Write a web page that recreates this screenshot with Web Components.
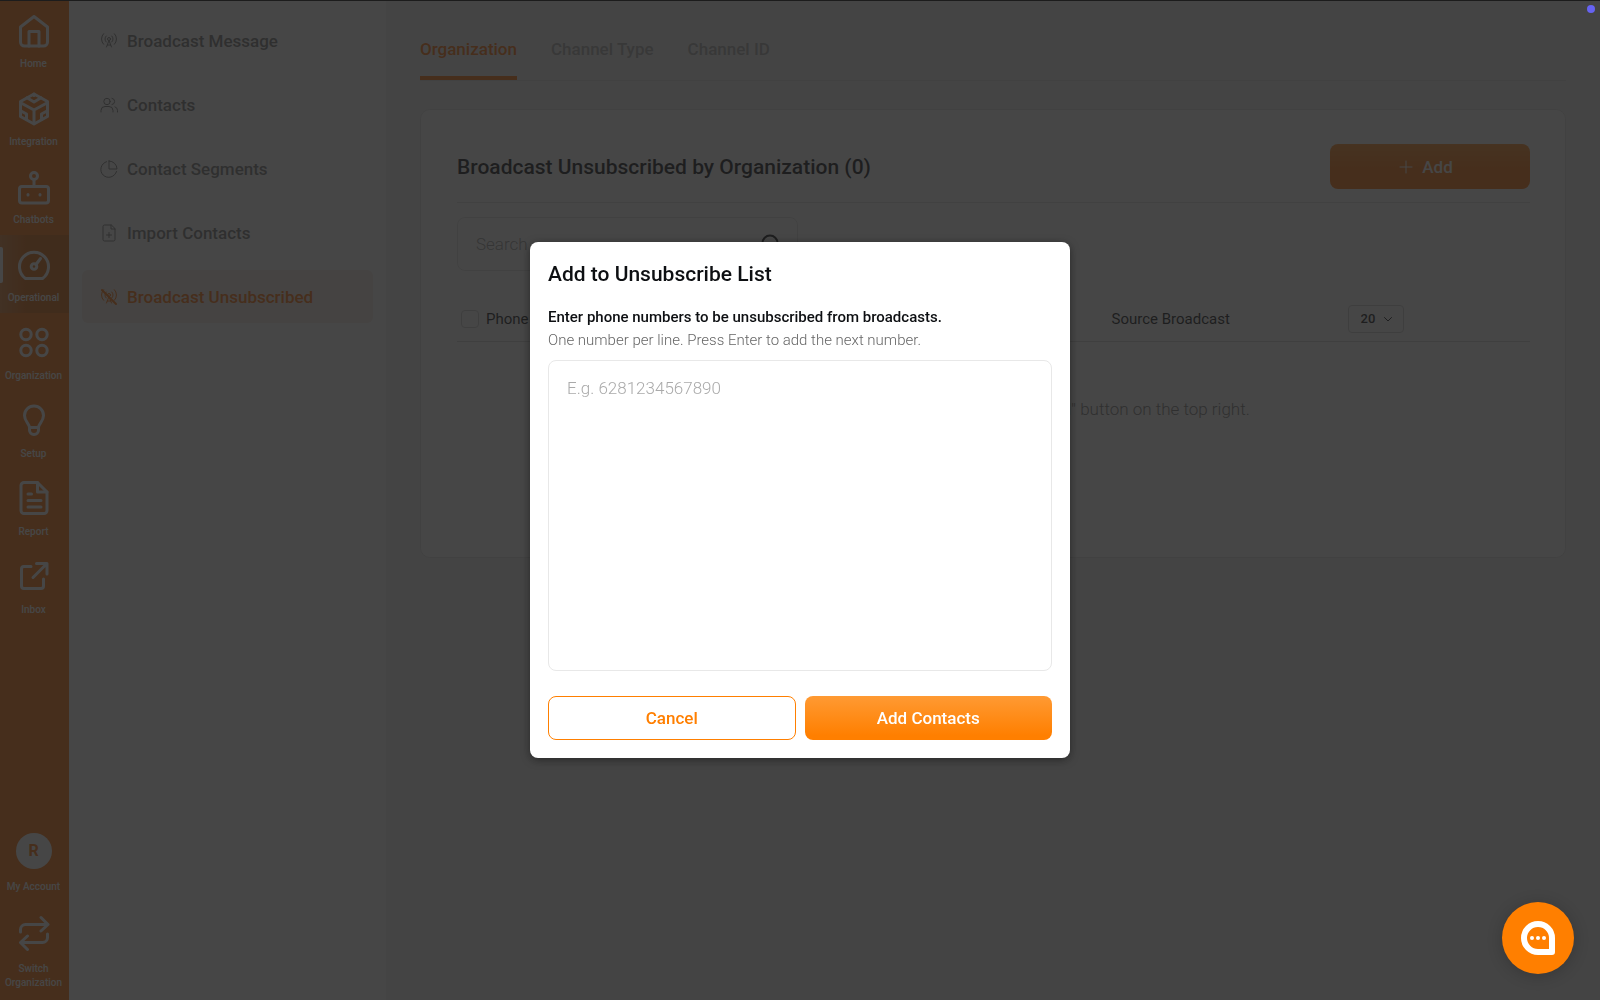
<!DOCTYPE html>
<html lang="en">
<head>
<meta charset="utf-8">
<meta name="viewport" content="width=device-width, initial-scale=1">
<title>Broadcast Unsubscribed</title>
<style>
  :root {
    --orange: #ff7f00;
    --brand: #ff6d00;
    --line: #e2e2e2;
    --muted: #777;
    --ink: #0d0f12;
  }
  body {
    margin: 0;
    font-family: Roboto, "Liberation Sans", sans-serif;
    font-size: 16px;
    color: var(--ink);
    background: #f3f3f3;
  }
</style>
</head>
<body>
<app-shell>
  <app-rail slot="rail">
    <rail-item icon="home" label="Home"></rail-item>
    <rail-item icon="cube" label="Integration"></rail-item>
    <rail-item icon="bot" label="Chatbots"></rail-item>
    <rail-item icon="gauge" label="Operational" active></rail-item>
    <rail-item icon="circles" label="Organization"></rail-item>
    <rail-item icon="bulb" label="Setup"></rail-item>
    <rail-item icon="report" label="Report"></rail-item>
    <rail-item icon="external" label="Inbox"></rail-item>
    <rail-item slot="bottom" initial="R" label="My Account"></rail-item>
    <rail-item slot="bottom" icon="switch" label="Switch Organization"></rail-item>
  </app-rail>
  <side-menu slot="menu">
    <side-link icon="broadcast">Broadcast Message</side-link>
    <side-link icon="users">Contacts</side-link>
    <side-link icon="pie">Contact Segments</side-link>
    <side-link icon="import">Import Contacts</side-link>
    <side-link icon="broadcast-off" active>Broadcast Unsubscribed</side-link>
  </side-menu>
  <tab-bar tabs="Organization,Channel Type,Channel ID"></tab-bar>
  <unsubscribed-card></unsubscribed-card>
</app-shell>
<unsubscribe-dialog></unsubscribe-dialog>
<chat-bubble></chat-bubble>
<status-dot></status-dot>

<script>
  const tower = '<circle cx="9" cy="7" r="1.5"/><path d="M9 8.5 6.5 15M9 8.5 11.5 15M7.3 13h3.4M6.2 10a4 4 0 0 1 0-6M11.8 10a4 4 0 0 0 0-6M3.6 12.3a7.5 7.5 0 0 1 0-10.6M14.4 12.3a7.5 7.5 0 0 0 0-10.6"/>';

  // name: [box size, stroke width, markup]
  const ICONS = {
    home: [36, 3, '<path d="M4.500 14 18 3.500 31.500 14V29a4 4 0 0 1-4 4h-19a4 4 0 0 1-4-4z"/><path d="M13 33V18.500h10V33"/>'],
    cube: [36, 3, '<path d="M18 3 31.500 10.500v15L18 33 4.500 25.500v-15z"/><path d="M6 12.500 18 19l12-6.500M18 19v13M11 6.800 18 11l7-4.200M18 3v1.500M5 20l5.500 3v5.500M31 20l-5.500 3v5.500"/>'],
    bot: [36, 3, '<rect x="3.500" y="17.500" width="29" height="16.500" rx="2.500"/><circle cx="18" cy="7" r="3.500"/><path d="M18 10.500v7"/><path d="M12 25.500v.4M24 25.500v.4"/>'],
    gauge: [36, 3, '<path d="M9.500 31.500a14.500 14.500 0 1 1 17 0z"/><circle cx="18" cy="19.500" r="2.800"/><path d="m20 17.500 4.500-6"/>'],
    circles: [36, 3, '<circle cx="10" cy="9.500" r="5.200"/><circle cx="26" cy="9.500" r="5.200"/><circle cx="10" cy="25.500" r="5.200"/><circle cx="26" cy="25.500" r="5.200"/>'],
    bulb: [36, 3, '<path d="M13.500 24.500c0-4-5-6-5-12a9.500 9.500 0 0 1 19 0c0 6-5 8-5 12v2.500a4.500 4.500 0 0 1-9 0zM13.500 24.500h9"/>'],
    report: [36, 3, '<path d="M21.500 1.500H8A3 3 0 0 0 5 4.500v25a3 3 0 0 0 3 3h20a3 3 0 0 0 3-3V11z"/><path d="M21.500 1.500V11H31M12 13h3.500M12 19.500h13M12 26h13"/>'],
    external: [36, 3, '<path d="M15 7.500H8a2.500 2.500 0 0 0-2.500 2.500v17A2.500 2.500 0 0 0 8 29.500h17a2.500 2.500 0 0 0 2.500-2.500v-7M20.500 4.500H31v10.500M30.500 5 17 18.500"/>'],
    switch: [36, 3, '<path d="M4.500 17v-2.500a5 5 0 0 1 5-5h22M25 2.500l7 7-7 6.500M31.500 19v3.500a5 5 0 0 1-5 5h-22M11.500 21l-7 6.500 7 7"/>'],
    broadcast: [18, 1, tower],
    'broadcast-off': [18, 1, tower + '<path stroke-width="2" d="m2 2 14 14"/>'],
    users: [18, 1, '<circle cx="7" cy="5.500" r="3.200"/><path d="M1 16v-1.500a4 4 0 0 1 4-4h4a4 4 0 0 1 4 4V16M12 2.300a3.200 3.200 0 0 1 0 6.300M15 10.800a3.700 3.700 0 0 1 2.500 3.700V16"/>'],
    pie: [18, 1, '<path d="M9 1v8h8A8 8 0 0 0 9 1z"/><path d="M6.500 1.700A8 8 0 1 0 16.500 11.500"/>'],
    import: [18, 1, '<path d="M11 1H4.500A1.500 1.500 0 0 0 3 2.500v13A1.500 1.500 0 0 0 4.500 17h9a1.500 1.500 0 0 0 1.500-1.500V5zM11 1v4h4M9 8.500v5M6.500 11h5"/>'],
    plus: [14, 1, '<path d="M7 1v12M1 7h12"/>'],
    search: [20, 2, '<circle cx="9" cy="9" r="7.500"/><path d="m14.500 14.500 4.500 4.500"/>'],
    chevron: [10, 1, '<path d="m1.500 3.500 3.500 3.500 3.500-3.500"/>']
  };

  class UiIcon extends HTMLElement {
    connectedCallback() {
      const [size, width, body] = ICONS[this.getAttribute('name')];
      this.attachShadow({ mode: 'open' });
      this.shadowRoot.innerHTML = `
        <style>
          :host { display: inline-flex; flex: none; }
          svg { fill: none; stroke: currentColor; stroke-linecap: round; stroke-linejoin: round; }
        </style>
        <svg width="${size}" height="${size}" viewBox="0 0 ${size} ${size}" stroke-width="${width}" aria-hidden="true">${body}</svg>
      `;
    }
  }

  class AppShell extends HTMLElement {
    connectedCallback() {
      this.attachShadow({ mode: 'open' });
      this.shadowRoot.innerHTML = `
        <style>
          :host {
            display: grid;
            grid-template-columns: 69px 317px 1fr;
            min-height: 100vh;
            box-sizing: border-box;
            border-top: 1px solid #000;
          }
          main { padding: 0 34px; }
        </style>
        <slot name="rail"></slot>
        <slot name="menu"></slot>
        <main><slot></slot></main>
      `;
    }
  }

  class AppRail extends HTMLElement {
    connectedCallback() {
      this.attachShadow({ mode: 'open' });
      this.shadowRoot.innerHTML = `
        <style>
          :host { display: block; background: var(--brand); color: white; }
          nav { display: flex; flex-direction: column; height: 100%; }
          .bottom { margin-top: auto; display: flex; flex-direction: column; gap: 3px; padding-bottom: 4px; }
        </style>
        <nav aria-label="Main">
          <slot></slot>
          <div class="bottom"><slot name="bottom"></slot></div>
        </nav>
      `;
    }
  }

  class RailItem extends HTMLElement {
    connectedCallback() {
      const initial = this.getAttribute('initial');
      this.attachShadow({ mode: 'open' });
      this.shadowRoot.innerHTML = `
        <style>
          :host { display: block; }
          a {
            display: flex;
            flex-direction: column;
            align-items: center;
            gap: 8px;
            min-height: 78px;
            padding: 12px 2px 6px 0;
            box-sizing: border-box;
            color: inherit;
            text-decoration: none;
            font-size: 10px;
            font-weight: 500;
            line-height: 14px;
            text-align: center;
          }
          :host([slot="bottom"]) a { gap: 11px; }
          :host([active]) { position: relative; }
          :host([active]) a {
            background: linear-gradient(90deg, rgba(255, 255, 255, .2), transparent 40%), #dc6000;
          }
          :host([active])::before {
            content: "";
            position: absolute;
            left: 0;
            top: 12px;
            width: 3px;
            height: 36px;
            background: white;
            border-radius: 0 2px 2px 0;
          }
          .avatar {
            width: 36px;
            height: 36px;
            border-radius: 50%;
            background: white;
            color: var(--brand);
            font-size: 16px;
            font-weight: 700;
            line-height: 36px;
          }
        </style>
        <a href="#">
          ${initial ? `<span class="avatar">${initial}</span>` : `<ui-icon name="${this.getAttribute('icon')}"></ui-icon>`}
          <span>${this.getAttribute('label')}</span>
        </a>
      `;
    }
  }

  class SideMenu extends HTMLElement {
    connectedCallback() {
      this.attachShadow({ mode: 'open' });
      this.shadowRoot.innerHTML = `
        <style>
          :host { display: block; background: white; }
          nav { display: flex; flex-direction: column; gap: 11px; padding: 13px; }
        </style>
        <nav aria-label="Operational"><slot></slot></nav>
      `;
    }
  }

  class SideLink extends HTMLElement {
    connectedCallback() {
      this.attachShadow({ mode: 'open' });
      this.shadowRoot.innerHTML = `
        <style>
          :host { display: block; color: var(--muted); }
          a {
            display: flex;
            align-items: center;
            gap: 9px;
            height: 53px;
            padding: 0 18px;
            border-radius: 6px;
            color: inherit;
            text-decoration: none;
            font-size: 17px;
            font-weight: 500;
          }
          :host([active]) { color: var(--brand); }
          :host([active]) a { background: #f6ece4; }
        </style>
        <a href="#"><ui-icon name="${this.getAttribute('icon')}"></ui-icon><span><slot></slot></span></a>
      `;
    }
  }

  class TabBar extends HTMLElement {
    connectedCallback() {
      const tabs = this.getAttribute('tabs').split(',');
      this.attachShadow({ mode: 'open' });
      this.shadowRoot.innerHTML = `
        <style>
          :host { display: block; border-bottom: 1px solid #ddd; }
          div { display: flex; gap: 34px; }
          button {
            border: 0;
            border-bottom: 4px solid transparent;
            background: none;
            padding: 36px 0 15px;
            font: 500 17px/24px Roboto, "Liberation Sans", sans-serif;
            color: #aaa;
          }
          button[aria-selected="true"] { color: var(--brand); border-color: var(--brand); }
        </style>
        <div role="tablist">
          ${tabs.map((t, i) => `<button role="tab" aria-selected="${i === 0}">${t}</button>`).join('')}
        </div>
      `;
    }
  }

  class UnsubscribedCard extends HTMLElement {
    connectedCallback() {
      this.attachShadow({ mode: 'open' });
      this.shadowRoot.innerHTML = `
        <style>
          :host {
            display: block;
            margin-top: 28px;
            padding: 34px 35px 136px 36px;
            background: white;
            border: 1px solid var(--line);
            border-radius: 10px;
          }
          header {
            display: flex;
            align-items: center;
            justify-content: space-between;
            padding-bottom: 13px;
            border-bottom: 1px solid var(--line);
          }
          h1 { margin: 0; font-size: 21px; font-weight: 500; }
          .add {
            display: flex;
            align-items: center;
            justify-content: center;
            gap: 9px;
            width: 200px;
            height: 45px;
            padding: 0 8px 0 0;
            border: 0;
            border-radius: 8px;
            background: linear-gradient(#ff8a20, var(--brand) 60%);
            color: white;
            font: 500 17px Roboto, "Liberation Sans", sans-serif;
          }
          .search {
            display: flex;
            align-items: center;
            width: 341px;
            height: 54px;
            margin: 14px 0 20px;
            padding: 0 16px;
            box-sizing: border-box;
            border: 1px solid var(--line);
            border-radius: 8px;
          }
          .search input {
            flex: 1;
            min-width: 0;
            border: 0;
            outline: 0;
            background: none;
            font: 300 17px Roboto, "Liberation Sans", sans-serif;
          }
          input::placeholder { color: #999; }
          table { width: 100%; table-layout: fixed; border-collapse: collapse; }
          th {
            height: 50px;
            padding: 6px 0 0;
            box-sizing: border-box;
            border-bottom: 1px solid #d5d5d5;
            text-align: left;
            font-size: 15px;
            font-weight: 400;
          }
          .phone { display: flex; align-items: center; gap: 7px; padding-left: 4px; }
          .phone input {
            appearance: none;
            width: 18px;
            height: 18px;
            margin: 0;
            border: 1px solid #ccc;
            border-radius: 4px;
          }
          .size { display: inline-grid; align-items: center; }
          .size select, .size ui-icon { grid-area: 1 / 1; }
          .size select {
            appearance: none;
            width: 56px;
            height: 28px;
            padding: 0 12px;
            border: 1px solid #ccc;
            border-radius: 4px;
            background: none;
            color: inherit;
            font: 500 13px Roboto, "Liberation Sans", sans-serif;
          }
          .size ui-icon { justify-self: end; margin-right: 11px; pointer-events: none; }
          td {
            padding: 55px 0 0;
            text-align: center;
            font-size: 17px;
            font-weight: 300;
            line-height: 24px;
            color: var(--muted);
          }
        </style>
        <header>
          <h1>Broadcast Unsubscribed by Organization (0)</h1>
          <button class="add"><ui-icon name="plus"></ui-icon>Add</button>
        </header>
        <div class="search">
          <input type="search" placeholder="Search" aria-label="Search">
          <ui-icon name="search"></ui-icon>
        </div>
        <table>
          <colgroup><col style="width: 61%"><col style="width: 22%"><col></colgroup>
          <thead>
            <tr>
              <th scope="col"><label class="phone"><input type="checkbox">Phone</label></th>
              <th scope="col">Source Broadcast</th>
              <th scope="col">
                <span class="size">
                  <select aria-label="Rows per page"><option>20</option><option>50</option></select>
                  <ui-icon name="chevron"></ui-icon>
                </span>
              </th>
            </tr>
          </thead>
          <tbody>
            <tr><td colspan="3">No contacts yet. Add one by clicking the "Add" button on the top right.</td></tr>
          </tbody>
        </table>
      `;
    }
  }

  class UnsubscribeDialog extends HTMLElement {
    connectedCallback() {
      this.attachShadow({ mode: 'open' });
      this.shadowRoot.innerHTML = `
        <style>
          :host {
            position: fixed;
            inset: 0;
            display: flex;
            align-items: center;
            justify-content: center;
            background: rgba(33, 33, 33, .835);
          }
          section {
            width: 540px;
            padding: 18px;
            box-sizing: border-box;
            border-radius: 8px;
            background: white;
            box-shadow: 0 2px 10px rgba(0, 0, 0, .45);
          }
          h2 { margin: 0 0 17px; font-size: 21px; font-weight: 500; line-height: 28px; }
          label { display: block; font-size: 15px; font-weight: 500; line-height: 24px; }
          p { margin: 0 0 9px; font-size: 15px; font-weight: 300; line-height: 22px; color: #666; }
          textarea {
            display: block;
            width: 100%;
            height: 311px;
            padding: 15px 18px;
            box-sizing: border-box;
            border: 1px solid #e8e8e8;
            border-radius: 8px;
            resize: none;
            font: 300 17px/24px Roboto, "Liberation Sans", sans-serif;
          }
          textarea::placeholder { color: #aaa; }
          footer { display: grid; grid-template-columns: 1fr 1fr; gap: 9px; margin-top: 25px; }
          button {
            height: 44px;
            border: 1px solid var(--orange);
            border-radius: 8px;
            background: white;
            color: var(--orange);
            font: 500 17px Roboto, "Liberation Sans", sans-serif;
          }
          .primary { border: 0; background: linear-gradient(#ff9a33, #ff7f00 90%); color: white; }
        </style>
        <section role="dialog" aria-labelledby="title">
          <h2 id="title">Add to Unsubscribe List</h2>
          <label for="numbers">Enter phone numbers to be unsubscribed from broadcasts.</label>
          <p>One number per line. Press Enter to add the next number.</p>
          <textarea id="numbers" placeholder="E.g. 6281234567890"></textarea>
          <footer>
            <button>Cancel</button>
            <button class="primary">Add Contacts</button>
          </footer>
        </section>
      `;
    }
  }

  class ChatBubble extends HTMLElement {
    connectedCallback() {
      this.attachShadow({ mode: 'open' });
      this.shadowRoot.innerHTML = `
        <style>
          :host { position: fixed; right: 26px; bottom: 26px; }
          button {
            display: flex;
            align-items: center;
            justify-content: center;
            width: 72px;
            height: 72px;
            padding: 0;
            border: 0;
            border-radius: 50%;
            background: var(--orange);
            box-shadow: 0 2px 16px rgba(0, 0, 0, .2);
          }
        </style>
        <button aria-label="Open chat">
          <svg width="34" height="34" viewBox="0 0 34 34" aria-hidden="true">
            <path d="M17 3a14 14 0 1 0 0 28h14V17A14 14 0 0 0 17 3z" fill="none" stroke="white" stroke-width="6" stroke-linejoin="round"/>
            <g fill="white"><circle cx="11" cy="17" r="2"/><circle cx="17" cy="17" r="2"/><circle cx="23" cy="17" r="2"/></g>
          </svg>
        </button>
      `;
    }
  }

  class StatusDot extends HTMLElement {
    connectedCallback() {
      this.attachShadow({ mode: 'open' });
      this.shadowRoot.innerHTML = `
        <style>
          :host {
            position: fixed;
            top: 5px;
            right: 5px;
            width: 8px;
            height: 8px;
            border-radius: 50%;
            background: #6663f2;
          }
        </style>
      `;
    }
  }

  customElements.define('ui-icon', UiIcon);
  customElements.define('app-shell', AppShell);
  customElements.define('app-rail', AppRail);
  customElements.define('rail-item', RailItem);
  customElements.define('side-menu', SideMenu);
  customElements.define('side-link', SideLink);
  customElements.define('tab-bar', TabBar);
  customElements.define('unsubscribed-card', UnsubscribedCard);
  customElements.define('unsubscribe-dialog', UnsubscribeDialog);
  customElements.define('chat-bubble', ChatBubble);
  customElements.define('status-dot', StatusDot);
</script>
</body>
</html>
